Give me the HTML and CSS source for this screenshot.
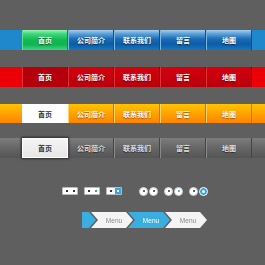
FILE: index.html
```html
<!DOCTYPE html>
<html lang="zh-CN">
<head>
  <meta charset="UTF-8">
  <title>导航菜单</title>
  <link rel="stylesheet" href="styles.css">
</head>
<body>
  <div class="page">
    <!-- 蓝色导航 -->
    <div class="nav nav-blue">
      <div class="nav-items">
        <div class="item active">首页</div>
        <div class="item">公司简介</div>
        <div class="item">联系我们</div>
        <div class="item">留言</div>
        <div class="item">地图</div>
      </div>
    </div>

    <!-- 红色导航 -->
    <div class="nav nav-red">
      <div class="nav-items">
        <div class="item active">首页</div>
        <div class="item">公司简介</div>
        <div class="item">联系我们</div>
        <div class="item">留言</div>
        <div class="item">地图</div>
      </div>
    </div>

    <!-- 橙色导航 -->
    <div class="nav nav-orange">
      <div class="nav-items">
        <div class="item active">首页</div>
        <div class="item">公司简介</div>
        <div class="item">联系我们</div>
        <div class="item">留言</div>
        <div class="item">地图</div>
      </div>
    </div>

    <!-- 灰色导航 -->
    <div class="nav nav-gray">
      <div class="nav-items">
        <div class="item active">首页</div>
        <div class="item">公司简介</div>
        <div class="item">联系我们</div>
        <div class="item">留言</div>
        <div class="item">地图</div>
      </div>
    </div>

    <!-- 分页按钮 -->
    <div class="pager">
      <div class="pager-group">
        <div class="box"><span class="dot"></span><span class="dot"></span></div>
        <div class="box"><span class="dot"></span><span class="dot dot-blue"></span></div>
        <div class="box box-on"><span class="dot"></span><span class="half"><span class="dot dot-white"></span></span></div>
      </div>
      <div class="pager-group circles">
        <div class="pair"><span class="circle"></span><span class="circle"></span></div>
        <div class="pair"><span class="circle"></span><span class="circle circle-blue"></span></div>
        <div class="pair"><span class="circle"></span><span class="circle circle-on"></span></div>
      </div>
    </div>

    <!-- 面包屑 -->
    <div class="crumbs">
      <div class="crumb crumb-start"></div>
      <div class="crumb">Menu</div>
      <div class="crumb crumb-on">Menu</div>
      <div class="crumb">Menu</div>
    </div>
  </div>
</body>
</html>
```

FILE: styles.css
```css
:root {
  --bg: #5f5f5f;
  --crumb-blue: #3aaee0;
  --font: "Noto Sans CJK SC", "Liberation Sans", sans-serif;
}

* {
  margin: 0;
  padding: 0;
  box-sizing: border-box;
}

body {
  background-color: var(--bg);
  font-family: var(--font);
  width: 265px;
  height: 265px;
  overflow: hidden;
}

.page {
  padding-top: 30px;
}

/* 导航条通用 */
.nav {
  height: 20px;
  margin-bottom: 17px;
}

.nav-items {
  display: flex;
  height: 100%;
  margin-left: 22px;
  width: 230px;
}

.item {
  flex: 1;
  display: flex;
  align-items: center;
  justify-content: center;
  font-size: 7px;
  font-weight: 700;
  color: #fff;
  white-space: nowrap;
}

/* 蓝色 */
.nav-blue {
  background-color: #1f88cc;
}

.nav-blue .item {
  background: linear-gradient(to bottom, #a6d0ee 0, #5ea3da 18%, #1a6cb4 45%, #0b5ca5 70%, #1577c2 100%);
  border-left: 1px solid #7fb6e2;
  border-right: 1px solid #0b4f8e;
  text-shadow: 0 1px 1px rgba(0, 0, 0, 0.6);
}

.nav-blue .item.active {
  background: linear-gradient(to bottom, #9cf0b6 0, #3ad878 20%, #14b650 50%, #12b552 75%, #38d98c 100%);
  border-left-color: #5ee08c;
  border-right-color: #0a8a3a;
}

/* 红色 */
.nav-red {
  background-color: #ec0008;
  margin-bottom: 16px;
}

.nav-red .item {
  background: linear-gradient(to bottom, #d4000f 0, #c5000d 60%, #b8000b 100%);
  border-left: 1px solid #e0303a;
  border-right: 1px solid #7e0006;
  text-shadow: 0 1px 1px rgba(0, 0, 0, 0.5);
}

.nav-red .item.active {
  background: #b5000c;
}

/* 橙色 */
.nav-orange {
  background: linear-gradient(to bottom, #ffc400 0, #ff9f00 55%, #ff8400 100%);
  border-top: 1px solid #52608a;
  margin-bottom: 15px;
}

.nav-orange .item {
  border-left: 1px solid #ffd46a;
  border-right: 1px solid #d87000;
  text-shadow: 0 1px 1px rgba(120, 60, 0, 0.7);
}

.nav-orange .item.active {
  background: #fff;
  color: #333;
  text-shadow: none;
  border-color: #fff;
}

/* 灰色 */
.nav-gray {
  background: linear-gradient(to bottom, #7c7c7c 0, #666 50%, #555 100%);
  margin-bottom: 28px;
}

.nav-gray .item {
  color: #e0e0e0;
  border-left: 1px solid #8a8a8a;
  border-right: 1px solid #444;
  text-shadow: 0 1px 1px rgba(0, 0, 0, 0.6);
}

.nav-gray .item.active {
  background: linear-gradient(to bottom, #f4f4f4, #e6e6e6);
  color: #333;
  text-shadow: none;
  border: 1px solid #fff;
  box-shadow: 0 0 2px 1px #2a2a2a;
  position: relative;
  z-index: 1;
}

/* 分页 */
.pager {
  display: flex;
  align-items: center;
  gap: 17px;
  padding-left: 62px;
  height: 10px;
  margin-bottom: 16px;
}

.pager-group {
  display: flex;
  align-items: center;
  gap: 6px;
}

.box {
  display: flex;
  width: 16px;
  height: 8px;
  background: #fff;
  border: 1px solid #bbb;
  border-radius: 1px;
  align-items: center;
  justify-content: space-around;
  overflow: hidden;
}

.dot {
  width: 2px;
  height: 2px;
  background: #333;
}

.dot-blue {
  background: #2a9ee0;
}

.dot-white {
  background: #fff;
}

.box-on {
  justify-content: flex-start;
}

.box-on > .dot {
  margin: 0 3px 0 3px;
}

.half {
  flex: 1;
  height: 100%;
  background: #34a6e0;
  display: flex;
  align-items: center;
  justify-content: center;
}

.pair {
  display: flex;
  gap: 1px;
}

.circle {
  width: 9px;
  height: 9px;
  border-radius: 50%;
  background: #fff;
  border: 1px solid #ccc;
  display: flex;
  align-items: center;
  justify-content: center;
}

.circle::after {
  content: "";
  width: 2px;
  height: 2px;
  background: #333;
  border-radius: 50%;
}

.circle-blue::after {
  background: #2a9ee0;
}

.circle-on {
  background: #2fa4e0;
  border-color: #fff;
}

.circle-on::after {
  width: 3px;
  height: 3px;
  background: #fff;
}

/* 面包屑 */
.crumbs {
  display: flex;
  height: 16px;
  padding-left: 82px;
}

.crumb {
  width: 42px;
  height: 100%;
  margin-left: -5px;
  background: #f4f4f4;
  color: #888;
  font-family: "Liberation Sans", sans-serif;
  font-size: 6.5px;
  display: flex;
  align-items: center;
  justify-content: center;
  padding-left: 4px;
  clip-path: polygon(0 0, calc(100% - 7px) 0, 100% 50%, calc(100% - 7px) 100%, 0 100%, 7px 50%);
  filter: drop-shadow(1px 0 0 rgba(0, 0, 0, 0.5));
}

.crumb-start {
  width: 14px;
  margin-left: 0;
  background: var(--crumb-blue);
  clip-path: polygon(0 0, calc(100% - 7px) 0, 100% 50%, calc(100% - 7px) 100%, 0 100%);
}

.crumb-on {
  background: var(--crumb-blue);
  color: #fff;
}
```
